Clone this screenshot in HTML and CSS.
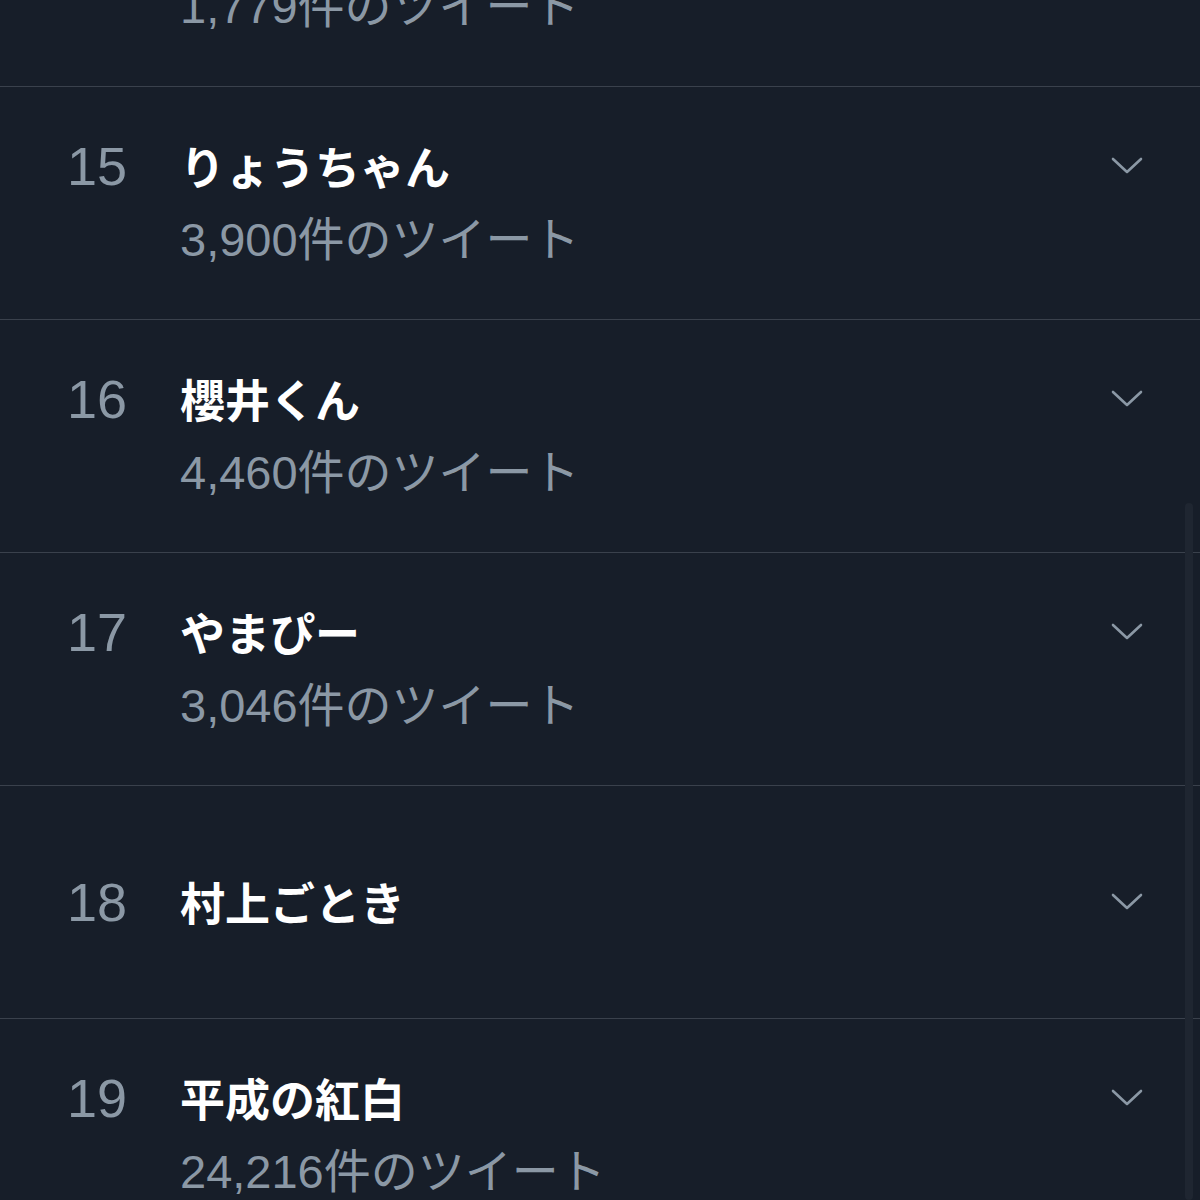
FILE: index.html
```html
<!DOCTYPE html>
<html lang="ja">
<head>
<meta charset="utf-8">
<link rel="stylesheet" href="styles.css">
</head>
<body>
<div class="list">
  <div class="row partial">
    <div class="item">
      <span class="count first">1,779件のツイート</span>
    </div>
  </div>
  <div class="row">
    <div class="item">
      <span class="rank">15</span>
      <span class="title">りょうちゃん</span>
      <svg class="chev" viewBox="0 0 32 18"><polyline points="2,2 16,15 30,2"/></svg>
      <span class="count">3,900件のツイート</span>
    </div>
  </div>
  <div class="row">
    <div class="item">
      <span class="rank">16</span>
      <span class="title">櫻井くん</span>
      <svg class="chev" viewBox="0 0 32 18"><polyline points="2,2 16,15 30,2"/></svg>
      <span class="count">4,460件のツイート</span>
    </div>
  </div>
  <div class="row">
    <div class="item">
      <span class="rank">17</span>
      <span class="title">やまぴー</span>
      <svg class="chev" viewBox="0 0 32 18"><polyline points="2,2 16,15 30,2"/></svg>
      <span class="count">3,046件のツイート</span>
    </div>
  </div>
  <div class="row">
    <div class="item">
      <span class="rank">18</span>
      <span class="title">村上ごとき</span>
      <svg class="chev" viewBox="0 0 32 18"><polyline points="2,2 16,15 30,2"/></svg>
    </div>
  </div>
  <div class="row">
    <div class="item">
      <span class="rank">19</span>
      <span class="title">平成の紅白</span>
      <svg class="chev" viewBox="0 0 32 18"><polyline points="2,2 16,15 30,2"/></svg>
      <span class="count">24,216件のツイート</span>
    </div>
  </div>
</div>
<div class="scrollbar"></div>
</body>
</html>
```
FILE: styles.css
```css
html, body {
  margin: 0;
  padding: 0;
  background: #171e29;
  height: 1200px;
  overflow: hidden;
}
body {
  position: relative;
  font-family: "Liberation Sans", "Noto Sans CJK JP", sans-serif;
}
.row {
  height: 232px;
  border-bottom: 1px solid #3a414c;
  display: flex;
  align-items: center;
}
.row.partial {
  height: 86px;
  align-items: flex-end;
}
.row.partial .item {
  padding-bottom: 47px;
}
.item {
  flex: 1;
  display: grid;
  grid-template-columns: 180px 1fr auto;
  align-items: baseline;
}
.rank {
  grid-column: 1;
  grid-row: 1;
  padding-left: 67px;
  font-size: 54px;
  color: #8b98a5;
}
.title {
  grid-column: 2;
  grid-row: 1;
  font-family: "Noto Sans CJK JP", sans-serif;
  font-weight: 700;
  font-size: 45px;
  line-height: 64px;
  color: #ffffff;
}
.chev {
  grid-column: 3;
  grid-row: 1;
  align-self: center;
  width: 32px;
  height: 18px;
  margin-right: 57px;
  fill: none;
  stroke: #8b98a5;
  stroke-width: 2.6;
  stroke-linecap: round;
  stroke-linejoin: round;
}
.count {
  grid-column: 2 / 4;
  grid-row: 2;
  margin-top: 10px;
  font-size: 47px;
  line-height: 64px;
  color: #8b98a5;
  font-weight: 400;
}
.count.first {
  grid-row: 1;
  margin-top: 0;
}
.scrollbar {
  position: absolute;
  left: 1185px;
  top: 503px;
  width: 8px;
  height: 697px;
  background: #1f2631;
  border-radius: 4px;
}
```
